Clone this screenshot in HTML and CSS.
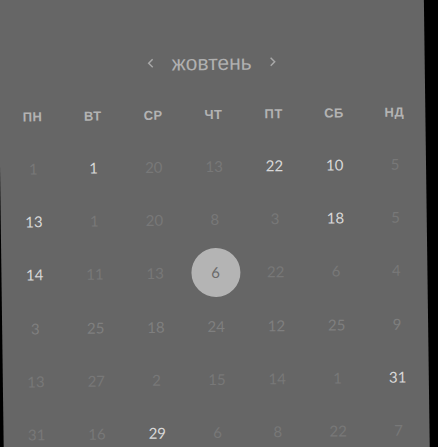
FILE: index.html
```html
<!DOCTYPE html>
<html lang="uk">
<head>
<meta charset="utf-8">
<title>Календар</title>
<link rel="stylesheet" href="styles.css">
</head>
<body>
<div class="panel">
  <div class="title-row">
    <svg class="chev" width="8" height="11" viewBox="0 0 8 11"><path d="M6 1.5 L2 5.5 L6 9.5" fill="none" stroke="#a8a8a8" stroke-width="1.5"/></svg>
    <span class="month">жовтень</span>
    <svg class="chev" width="8" height="11" viewBox="0 0 8 11"><path d="M2 1.5 L6 5.5 L2 9.5" fill="none" stroke="#a8a8a8" stroke-width="1.5"/></svg>
  </div>
  <div class="weekdays">
    <span>ПН</span><span>ВТ</span><span>СР</span><span>ЧТ</span><span>ПТ</span><span>СБ</span><span>НД</span>
  </div>
  <div class="days">
    <span class="d">1</span><span class="b">1</span><span class="d">20</span><span class="d">13</span><span class="b">22</span><span class="b">10</span><span class="d">5</span>
    <span class="b">13</span><span class="d">1</span><span class="d">20</span><span class="d">8</span><span class="d">3</span><span class="b">18</span><span class="d">5</span>
    <span class="b">14</span><span class="d">11</span><span class="d">13</span><span class="sel"><i>6</i></span><span class="d">22</span><span class="d">6</span><span class="d">4</span>
    <span class="m">3</span><span class="m">25</span><span class="m">18</span><span class="m">24</span><span class="m">12</span><span class="m">25</span><span class="m">9</span>
    <span class="d">13</span><span class="d">27</span><span class="d">2</span><span class="d">15</span><span class="d">14</span><span class="d">1</span><span class="b">31</span>
    <span class="d">31</span><span class="d">16</span><span class="b">29</span><span class="d">6</span><span class="d">8</span><span class="d">22</span><span class="d">7</span>
  </div>
</div>
</body>
</html>
```

FILE: styles.css
```css
html, body {
  margin: 0;
  padding: 0;
  background: #000;
  overflow: hidden;
  width: 438px;
  height: 447px;
}

.panel {
  width: 426px;
  height: 530px;
  margin-left: 1px;
  margin-top: -12px;
  padding-top: 63.5px;
  box-sizing: border-box;
  background: #666666;
  transform: rotate(-0.75deg);
  transform-origin: 212.5px 252px;
}

.title-row {
  display: flex;
  justify-content: center;
  align-items: center;
  height: 24px;
  gap: 17px;
}

.chev {
  display: block;
  margin-top: -3px;
}

.month {
  font-family: "Liberation Sans", Arial, sans-serif;
  font-size: 21px;
  line-height: 24px;
  color: #b0b0b0;
  margin-top: -2px;
}

.weekdays {
  display: grid;
  grid-template-columns: repeat(7, 60.3px);
  padding-left: 3px;
  margin-top: 15.5px;
  height: 48px;
  align-items: center;
}

.weekdays span {
  text-align: center;
  font-family: "Liberation Sans", Arial, sans-serif;
  font-weight: bold;
  font-size: 13px;
  letter-spacing: 0.5px;
  color: #b3b3b3;
  line-height: 48px;
}

.days {
  display: grid;
  grid-template-columns: repeat(7, 60.3px);
  grid-auto-rows: 53.33px;
  padding-left: 3px;
}

.days span {
  display: flex;
  justify-content: center;
  align-items: center;
  font-family: Lato, "Open Sans", sans-serif;
  font-size: 15px;
}

.days .d { color: #787878; }
.days .m { color: #7f7f7f; }
.days .b { color: #d8d8d8; }

.days .sel i {
  font-style: normal;
  width: 49px;
  height: 49px;
  border-radius: 50%;
  background: #b4b4b4;
  color: #6a6a6a;
  display: flex;
  justify-content: center;
  align-items: center;
}
```
